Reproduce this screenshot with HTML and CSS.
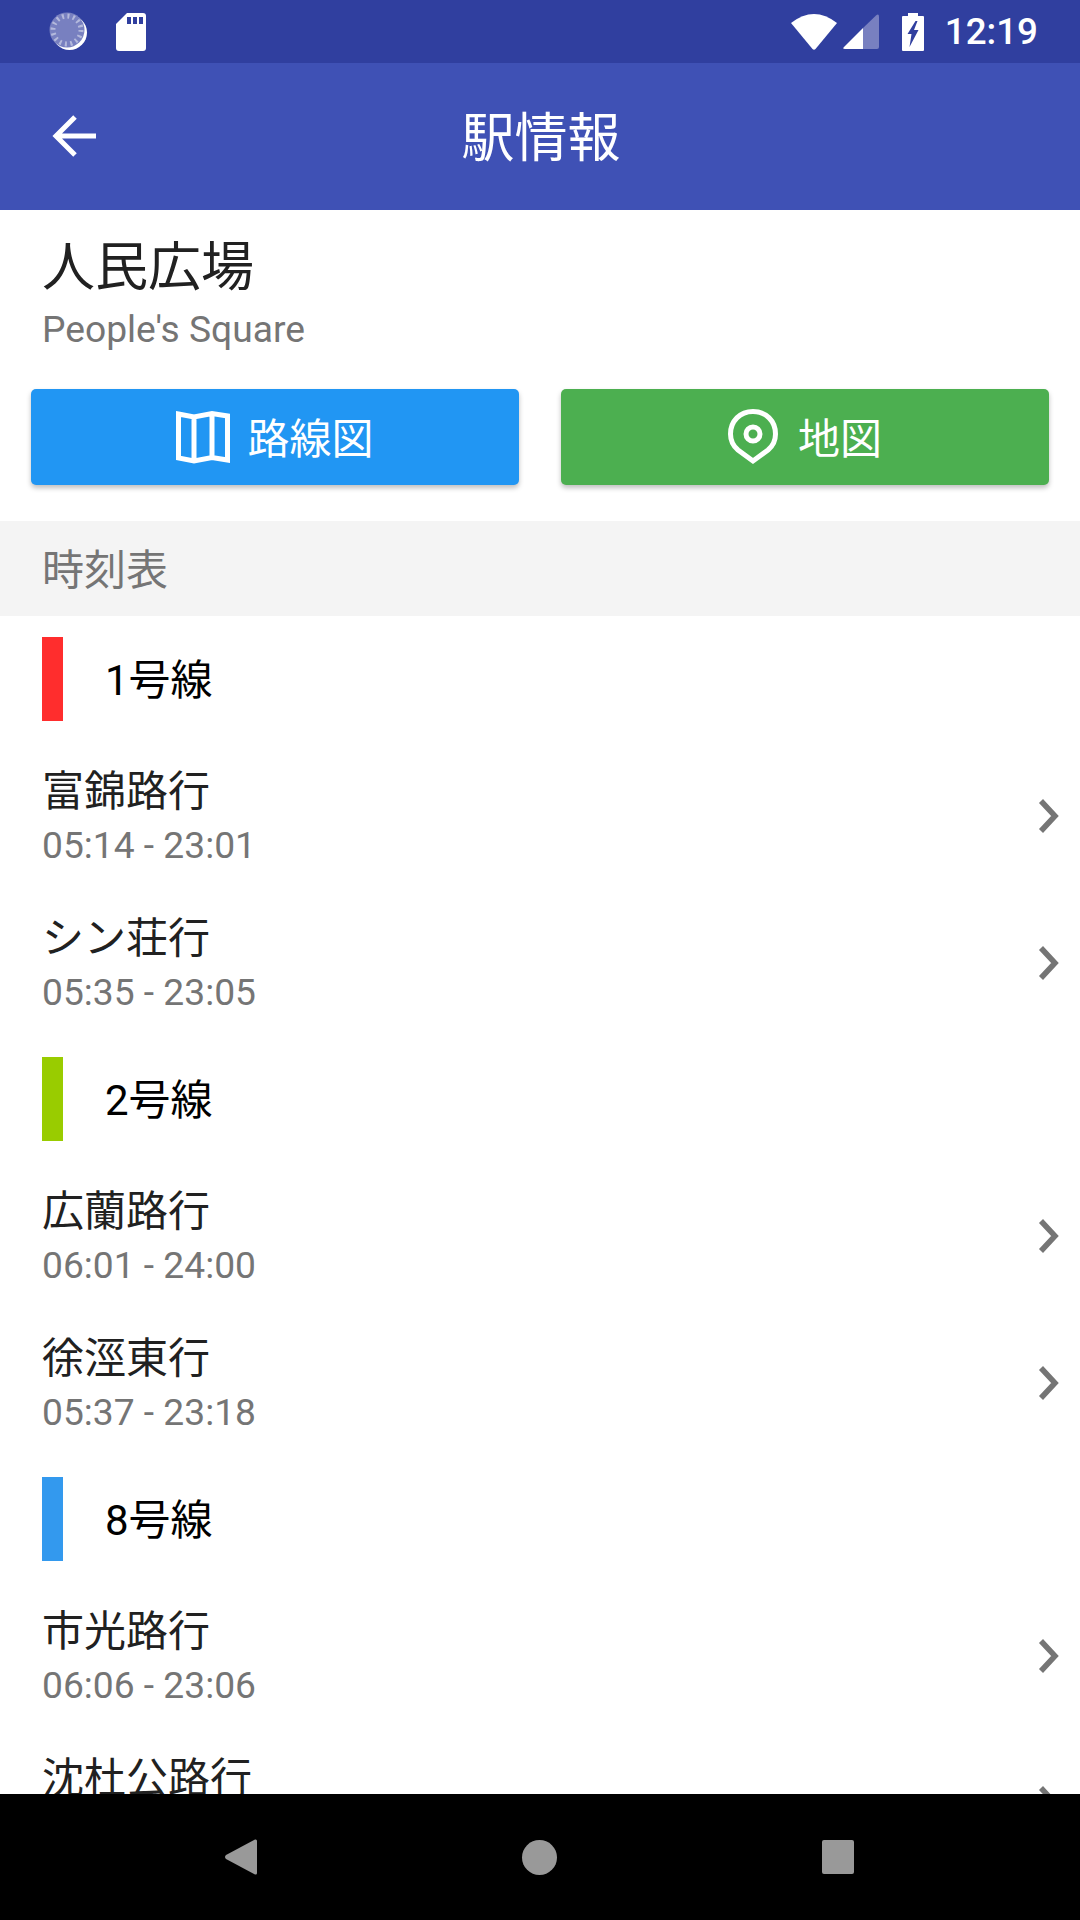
FILE: index.html
```html
<!DOCTYPE html>
<html lang="ja">
<head>
    <meta charset="UTF-8">
    <meta name="viewport" content="width=device-width, initial-scale=1.0">
    <title>駅情報</title>
    <link rel="stylesheet" href="styles.css">
</head>
<body>

    <svg class="defs" width="0" height="0">
        <symbol id="chevron" viewBox="0 0 24 36">
            <path d="M4 3 L18 18 L4 33" fill="none" stroke="#757575" stroke-width="5.5"/>
        </symbol>
    </svg>

    <!-- Status bar -->
    <div class="status-bar">
        <div class="status-left">
            <svg class="icon-sync" viewBox="0 0 40 40" width="40" height="40">
                <circle cx="20.5" cy="20.5" r="17.5" fill="#fff"/>
                <circle cx="18" cy="18" r="17.5" fill="#7880c0"/>
                <circle cx="18" cy="18" r="14" fill="none" stroke="#b4b9dc" stroke-width="5" stroke-dasharray="2 3.5"/>
            </svg>
            <svg class="icon-sd" viewBox="0 0 30 38" width="30" height="38">
                <path d="M11 0 H27 Q30 0 30 3 V35 Q30 38 27 38 H3 Q0 38 0 35 V11 Z" fill="#fff"/>
                <path d="M11 4 H15 V11 H11 Z M17 4 H21 V11 H17 Z M23 4 H27 V11 H23 Z" fill="#303f9f"/>
            </svg>
        </div>
        <div class="status-right">
            <svg class="icon-wifi" viewBox="0 0 46 36" width="46" height="36">
                <path d="M0 9 Q23 -9 46 9 L24.5 35 Q23 36.500 21.500 35 Z" fill="#fff"/>
            </svg>
            <svg class="icon-signal" viewBox="0 0 36 35" width="36" height="35">
                <path d="M20 14 L33 1.500 Q36 -1 36 3 V33 Q36 35 34 35 H20 Z" fill="#7880c0"/>
                <path d="M20 14 V35 H2 Q-1 35 1 33 Z" fill="#fff"/>
            </svg>
            <svg class="icon-battery" viewBox="0 0 22 38" width="22" height="38">
                <path d="M6 0 H16 V3 H21 Q22 3 22 4 V37 Q22 38 21 38 H1 Q0 38 0 37 V4 Q0 3 1 3 H6 Z" fill="#fff"/>
                <path d="M13.500 8 L5.500 21 H9.500 L7.500 34 L16.500 17 H12 L15.500 8 Z" fill="#303f9f"/>
            </svg>
            <span class="status-time">12:19</span>
        </div>
    </div>

    <!-- App bar -->
    <header class="app-bar">
        <svg class="icon-back" viewBox="0 0 44 44" width="44" height="44">
            <path d="M23 3 L4 22 L23 41 M4 22 H44" fill="none" stroke="#fff" stroke-width="5"/>
        </svg>
        <h1 class="app-title">駅情報</h1>
    </header>

    <main class="content">
        <section class="station">
            <div class="station-name">人民広場</div>
            <div class="station-sub">People's Square</div>
        </section>

        <div class="actions">
            <a class="action action-blue">
                <svg viewBox="0 0 54 54" width="54" height="54">
                    <path d="M2.500 4 L18 7 L36 3.500 L51.500 6 V50 L36 47.500 L18 51 L2.500 48 Z M18 7 V51 M36 3.500 V47.500" fill="none" stroke="#fff" stroke-width="5"/>
                </svg>
                <span>路線図</span>
            </a>
            <a class="action action-green">
                <svg viewBox="0 0 50 56" width="50" height="56">
                    <path d="M25 52 L10 41 C4 36 2.500 31 2.500 25 C2.500 12 12 2.500 25 2.500 C38 2.500 47.500 12 47.500 25 C47.500 31 46 36 40 41 Z" fill="none" stroke="#fff" stroke-width="5"/>
                    <circle cx="25" cy="25" r="7" fill="none" stroke="#fff" stroke-width="5"/>
                </svg>
                <span>地図</span>
            </a>
        </div>

        <div class="section-title">時刻表</div>

        <!-- Lines -->
        <div class="line-head"><span class="line-mark red"></span><span class="line-name">1号線</span></div>
        <div class="row">
            <div class="row-text"><div class="row-name">富錦路行</div><div class="row-time">05:14 - 23:01</div></div>
            <svg class="row-arrow"><use href="#chevron"/></svg>
        </div>
        <div class="row">
            <div class="row-text"><div class="row-name">シン荘行</div><div class="row-time">05:35 - 23:05</div></div>
            <svg class="row-arrow"><use href="#chevron"/></svg>
        </div>

        <div class="line-head"><span class="line-mark lime"></span><span class="line-name">2号線</span></div>
        <div class="row">
            <div class="row-text"><div class="row-name">広蘭路行</div><div class="row-time">06:01 - 24:00</div></div>
            <svg class="row-arrow"><use href="#chevron"/></svg>
        </div>
        <div class="row">
            <div class="row-text"><div class="row-name">徐涇東行</div><div class="row-time">05:37 - 23:18</div></div>
            <svg class="row-arrow"><use href="#chevron"/></svg>
        </div>

        <div class="line-head"><span class="line-mark sky"></span><span class="line-name">8号線</span></div>
        <div class="row">
            <div class="row-text"><div class="row-name">市光路行</div><div class="row-time">06:06 - 23:06</div></div>
            <svg class="row-arrow"><use href="#chevron"/></svg>
        </div>
        <div class="row">
            <div class="row-text"><div class="row-name">沈杜公路行</div><div class="row-time"></div></div>
            <svg class="row-arrow"><use href="#chevron"/></svg>
        </div>
    </main>

    <!-- Navigation bar -->
    <nav class="nav-bar">
        <svg viewBox="0 0 32 36" width="32" height="36">
            <path d="M30 0.500 Q32 0 32 2 V34 Q32 36 30 35.500 L1 20 Q-1 18 1 16 Z" fill="#999"/>
        </svg>
        <span class="nav-circle"></span>
        <span class="nav-square"></span>
    </nav>

</body>
</html>
```

FILE: styles.css
```css
/* Page */
body {
    margin: 0;
    width: 1080px;
    height: 1920px;
    display: flex;
    flex-direction: column;
    overflow: hidden;
    background-color: #fff;
    font-family: Roboto, "Noto Sans CJK JP", sans-serif;
    color: #212121;
}

.defs {
    position: absolute;
}

/* Status bar */
.status-bar {
    height: 63px;
    flex: none;
    display: flex;
    justify-content: space-between;
    align-items: center;
    background-color: #303f9f;
    color: #fff;
}

.status-left {
    display: flex;
    align-items: center;
    gap: 27px;
    padding-left: 49px;
}

.status-right {
    display: flex;
    align-items: center;
    padding-right: 42px;
}

.icon-signal {
    margin-left: 6px;
}

.icon-battery {
    margin-left: 23px;
}

.status-time {
    margin-left: 21px;
    font-size: 36.75px;
    font-weight: 500;
}

/* App bar */
.app-bar {
    height: 147px;
    flex: none;
    position: relative;
    display: flex;
    align-items: center;
    justify-content: center;
    background-color: #3f51b5;
}

.icon-back {
    position: absolute;
    left: 52px;
    top: 51px;
}

.app-title {
    margin: 0;
    padding: 0 0 5px 2px;
    color: #fff;
    font-size: 53px;
    font-weight: 400;
}

/* Scrolling content */
.content {
    flex: 1;
    min-height: 0;
    overflow: hidden;
}

.station {
    height: 179px;
    padding: 23px 42px 0;
    box-sizing: border-box;
}

.station-name {
    font-size: 53px;
    line-height: 70px;
}

.station-sub {
    margin-top: 2px;
    font-size: 37.2px;
    line-height: 49px;
    color: #757575;
}

/* Buttons */
.actions {
    display: flex;
    gap: 42px;
    padding: 0 31px 36px;
}

.action {
    flex: 1;
    height: 96px;
    display: flex;
    align-items: center;
    justify-content: center;
    gap: 17px;
    border-radius: 5px;
    color: #fff;
    font-size: 42px;
    box-shadow: 0 3px 5px rgba(0, 0, 0, 0.25);
}

.action span {
    padding-bottom: 4px;
}

.action-blue {
    background-color: #2196f3;
}

.action-green {
    gap: 20px;
    background-color: #4caf50;
}

/* Timetable */
.section-title {
    height: 95px;
    padding-left: 42px;
    line-height: 99px;
    font-size: 42px;
    color: #757575;
    background-color: #f4f4f4;
}

.line-head {
    height: 126px;
    display: flex;
    align-items: center;
    gap: 42px;
    padding-left: 42px;
    font-size: 42px;
    color: #000;
}

.line-name {
    padding-bottom: 6px;
}

.line-mark {
    width: 21px;
    height: 84px;
}

.red {
    background-color: #ff2d2d;
}

.lime {
    background-color: #99cc00;
}

.sky {
    background-color: #3399ee;
}

.row {
    height: 147px;
    display: flex;
    align-items: center;
    justify-content: space-between;
    padding: 0 19px 0 42px;
}

.row-text {
    padding-top: 3px;
}

.row-name {
    font-size: 42px;
    line-height: 56px;
}

.row-time {
    height: 49px;
    margin-top: 1px;
    font-size: 37.2px;
    line-height: 49px;
    color: #757575;
}

.row-arrow {
    width: 24px;
    height: 36px;
}

/* Navigation bar */
.nav-bar {
    height: 126px;
    flex: none;
    position: relative;
    display: flex;
    align-items: center;
    justify-content: space-between;
    padding: 0 226px 0 225px;
    background-color: #000;
}

.nav-circle {
    width: 35px;
    height: 35px;
    border-radius: 50%;
    background-color: #999;
}

.nav-square {
    width: 32px;
    height: 34px;
    border-radius: 2px;
    background-color: #999;
}
```
